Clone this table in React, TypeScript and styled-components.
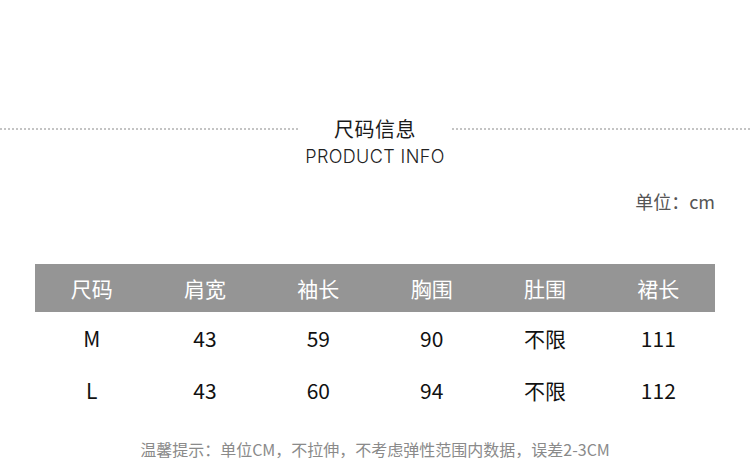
import React from 'react';
import styled, { createGlobalStyle } from 'styled-components';

const GlobalStyle = createGlobalStyle`
  html, body {
    margin: 0;
    padding: 0;
    background: #fff;
  }
  body {
    font-family: "Noto Sans CJK SC", "Noto Sans", sans-serif;
  }
`;

const Page = styled.div`
  width: 750px;
  height: 463px;
  background: #fff;
  overflow: hidden;
  display: flex;
  flex-direction: column;
`;

const TitleRow = styled.div`
  margin-top: 115px;
  display: grid;
  grid-template-columns: 298px 1fr 298px;
  align-items: center;
`;

const DotLine = styled.div`
  height: 2px;
  background-image: linear-gradient(to right, #c4c4c4 50%, transparent 50%);
  background-size: 4px 2px;
  background-repeat: repeat-x;
`;

const Title = styled.div`
  text-align: center;
  font-size: 20px;
  line-height: 28px;
  color: #1a1a1a;
  letter-spacing: 0.5px;
`;

const SubTitle = styled.div`
  text-align: center;
  font-family: "Inter", "Noto Sans", sans-serif;
  font-weight: 300;
  font-size: 18px;
  line-height: 24px;
  margin-top: 2px;
  color: #222;
  letter-spacing: 0.4px;
`;

const Body = styled.div`
  padding: 0 35px;
  display: flex;
  flex-direction: column;
`;

const Unit = styled.div`
  align-self: flex-end;
  margin-top: 20px;
  font-size: 18px;
  line-height: 24px;
  color: #555;
`;

const Table = styled.div`
  margin-top: 51px;
  display: grid;
  grid-template-columns: repeat(6, 1fr);
`;

const HeadCell = styled.div`
  height: 48px;
  background: #959595;
  color: #fff;
  font-size: 21px;
  display: flex;
  align-items: center;
  justify-content: center;
`;

const Cell = styled.div`
  height: 52px;
  color: #111;
  font-size: 21px;
  display: flex;
  align-items: center;
  justify-content: center;
`;

const Note = styled.div`
  margin-top: 22px;
  text-align: center;
  font-size: 16px;
  line-height: 22px;
  color: #8a8a8a;
`;

const headers = ['尺码', '肩宽', '袖长', '胸围', '肚围', '裙长'];
const rows = [
  ['M', '43', '59', '90', '不限', '111'],
  ['L', '43', '60', '94', '不限', '112'],
];

export default function App() {
  return (
    <>
      <GlobalStyle />
      <Page>
        <TitleRow>
          <DotLine />
          <Title>尺码信息</Title>
          <DotLine />
        </TitleRow>
        <SubTitle>PRODUCT INFO</SubTitle>
        <Body>
          <Unit>单位：cm</Unit>
          <Table>
            {headers.map((h) => (
              <HeadCell key={h}>{h}</HeadCell>
            ))}
            {rows.map((r) =>
              r.map((v, i) => <Cell key={r[0] + i}>{v}</Cell>)
            )}
          </Table>
          <Note>温馨提示：单位CM，不拉伸，不考虑弹性范围内数据，误差2-3CM</Note>
        </Body>
      </Page>
    </>
  );
}
